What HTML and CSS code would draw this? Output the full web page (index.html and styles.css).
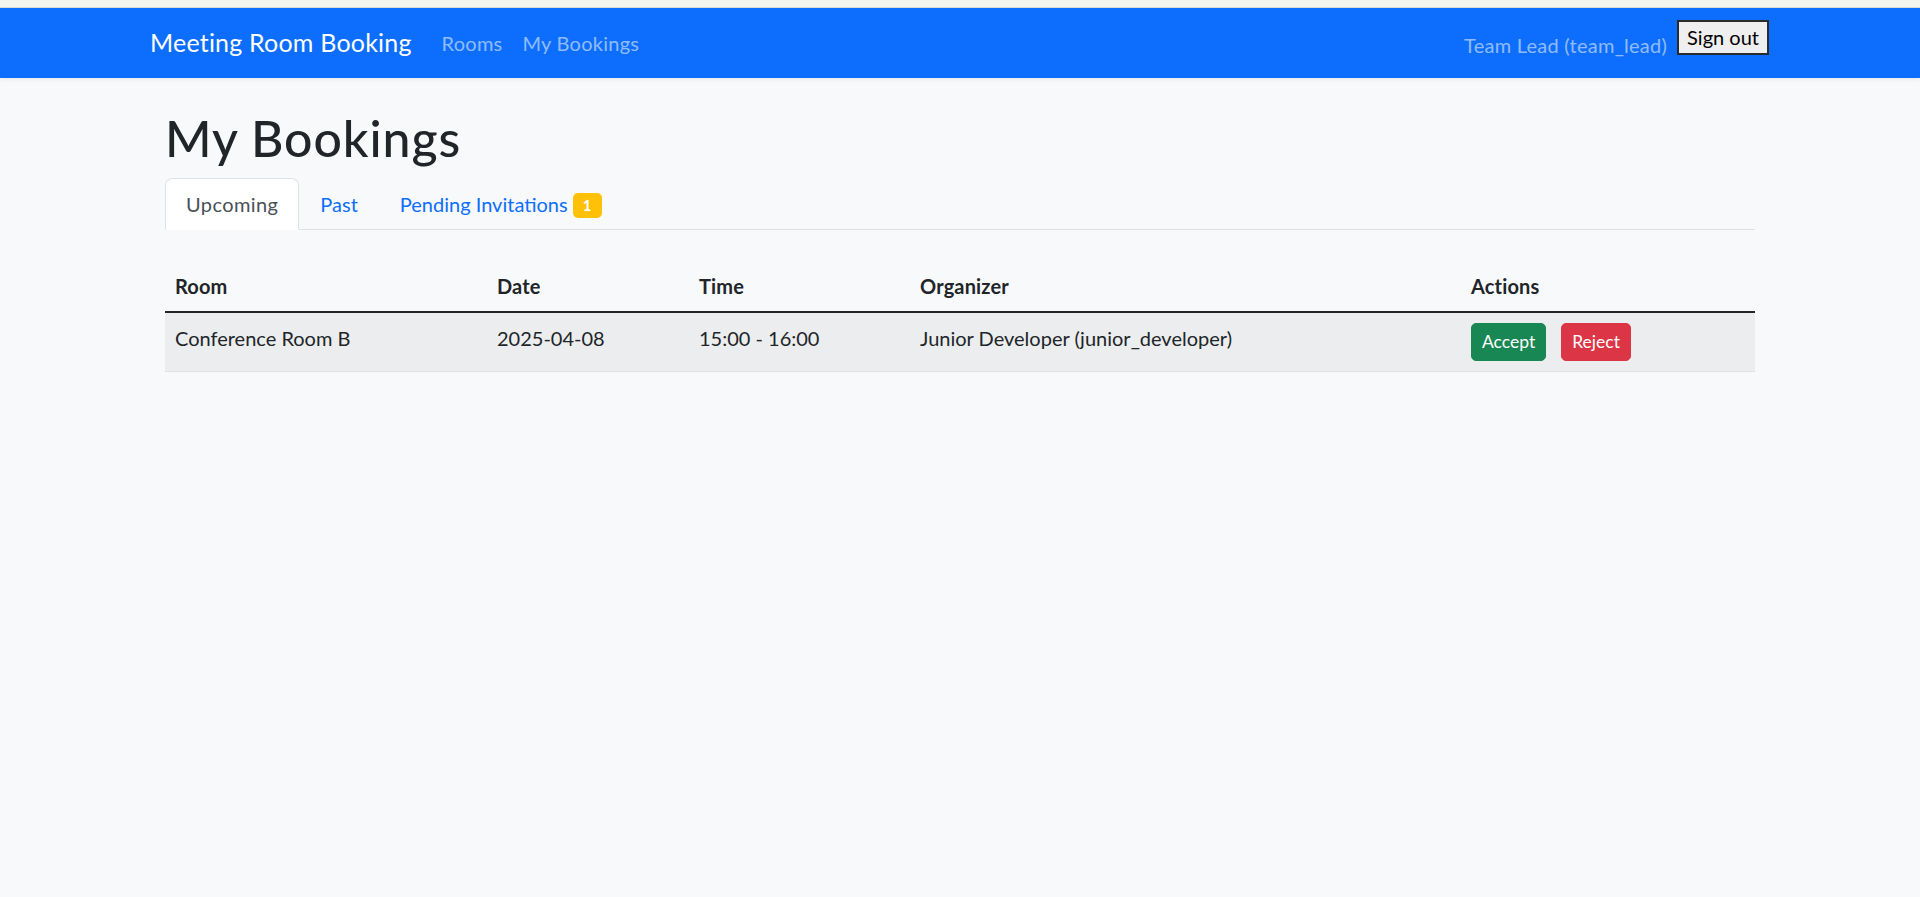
FILE: index.html
```html
<!DOCTYPE html>
<html lang="en">
<head>
<meta charset="utf-8">
<title>My Bookings - Meeting Room Booking</title>
<link rel="stylesheet" href="styles.css">
</head>
<body>
<div class="top-strip"></div>
<nav class="navbar">
  <div class="nav-container">
    <a class="brand" href="#">Meeting Room Booking</a>
    <ul class="nav-links">
      <li><a class="nav-link" href="#">Rooms</a></li>
      <li><a class="nav-link" href="#">My Bookings</a></li>
    </ul>
    <div class="nav-user">
      <span class="user-name">Team Lead (team_lead)</span>
      <button class="signout" type="button">Sign out</button>
    </div>
  </div>
</nav>
<main class="main">
  <h1 class="page-title">My Bookings</h1>
  <ul class="tabs">
    <li><a class="tab active" href="#">Upcoming</a></li>
    <li><a class="tab" href="#">Past</a></li>
    <li><a class="tab" href="#">Pending Invitations <span class="badge">1</span></a></li>
  </ul>
  <table class="bookings">
    <colgroup>
      <col class="c-room">
      <col class="c-date">
      <col class="c-time">
      <col class="c-org">
      <col class="c-act">
    </colgroup>
    <thead>
      <tr>
        <th>Room</th>
        <th>Date</th>
        <th>Time</th>
        <th>Organizer</th>
        <th>Actions</th>
      </tr>
    </thead>
    <tbody>
      <tr class="striped">
        <td>Conference Room B</td>
        <td>2025-04-08</td>
        <td>15:00 - 16:00</td>
        <td>Junior Developer (junior_developer)</td>
        <td><button class="btn btn-accept" type="button">Accept</button><button class="btn btn-reject" type="button">Reject</button></td>
      </tr>
    </tbody>
  </table>
</main>
</body>
</html>
```
FILE: styles.css
```css
* { box-sizing: border-box; }

html, body {
  margin: 0;
  padding: 0;
}

body {
  background: #f8f9fa;
  color: #212529;
  font-family: Lato, "Liberation Sans", sans-serif;
  font-size: 20px;
  line-height: 30px;
  letter-spacing: 0.15px;
  min-height: 897px;
}

.top-strip {
  height: 8px;
  background: #f4f5ef;
  border-bottom: 1px solid #dcdcd6;
}

.navbar {
  background: #0d6efd;
  height: 70px;
  padding: 10px 0;
  box-shadow: 0 2px 4px rgba(0, 0, 0, 0.06);
}

.nav-container {
  width: 1620px;
  margin: 0 auto;
  display: flex;
  align-items: center;
  height: 50px;
}

.brand {
  color: #ffffff;
  text-decoration: none;
  font-size: 25px;
  line-height: 37.5px;
  padding: 6px 0;
  margin-right: 20px;
  letter-spacing: 0.2px;
}

.nav-links {
  list-style: none;
  margin: 0;
  padding: 0;
  display: flex;
}

.nav-link {
  display: block;
  padding: 10px;
  color: rgba(255, 255, 255, 0.55);
  text-decoration: none;
  letter-spacing: 0.25px;
}

.nav-user {
  margin-left: auto;
  display: flex;
  align-items: center;
  gap: 10px;
}

.user-name {
  color: rgba(255, 255, 255, 0.55);
  padding-top: 4px;
  letter-spacing: 0.25px;
}

.signout {
  font-family: inherit;
  font-size: 20px;
  line-height: 27px;
  height: 35px;
  padding: 0 8px;
  background: #efefef;
  color: #000;
  border: 2px solid #2b2b2b;
  border-radius: 0;
  margin-top: -12px;
  margin-right: 1px;
  letter-spacing: 0;
}

.main {
  width: 1590px;
  margin: 0 auto;
}

.page-title {
  font-size: 50px;
  font-weight: 500;
  line-height: 60px;
  margin: 30px 0 10px;
  letter-spacing: 0.9px;
}

.tabs {
  list-style: none;
  margin: 0;
  padding: 0;
  display: flex;
  border-bottom: 1px solid #dee2e6;
}

.tab {
  display: block;
  padding: 10px 20px;
  border: 1px solid transparent;
  border-top-left-radius: 7px;
  border-top-right-radius: 7px;
  margin-bottom: -1px;
  color: #0d6efd;
  text-decoration: none;
  letter-spacing: 0;
}

.tab.active {
  color: #495057;
  background: #ffffff;
  border-color: #dee2e6 #dee2e6 #ffffff;
  letter-spacing: 0.4px;
}

.badge {
  display: inline-block;
  font-size: 15px;
  font-weight: 700;
  line-height: 1;
  padding: 5px 10px;
  color: #ffffff;
  background: #ffc107;
  border-radius: 5px;
  vertical-align: 1px;
  letter-spacing: 0;
}

.bookings {
  width: 100%;
  margin-top: 31px;
  border-collapse: collapse;
  table-layout: fixed;
}

.c-room { width: 322px; }
.c-date { width: 202px; }
.c-time { width: 221px; }
.c-org { width: 551px; }
.c-act { width: 294px; }

.bookings th,
.bookings td {
  padding: 10px;
  text-align: left;
  vertical-align: top;
  border-bottom: 1px solid #dee2e6;
}

.bookings td {
  letter-spacing: 0;
}

.bookings th {
  font-weight: 700;
  border-bottom: 2px solid #212529;
}

.bookings tr.striped td {
  background: #ecedee;
}

.btn {
  font-family: inherit;
  font-size: 17.5px;
  line-height: 26px;
  padding: 5px 10px;
  border: 1px solid transparent;
  border-radius: 5px;
  color: #ffffff;
  cursor: pointer;
  letter-spacing: 0;
}

.btn-accept {
  background: #198754;
  border-color: #198754;
  margin-right: 15px;
}

.btn-reject {
  background: #dc3545;
  border-color: #dc3545;
}
```
